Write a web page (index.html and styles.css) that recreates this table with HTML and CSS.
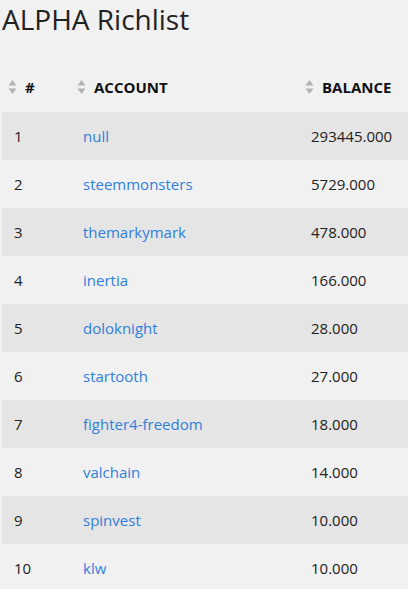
FILE: index.html
```html
<!DOCTYPE html>
<html>
<head>
<meta charset="utf-8">
<link rel="stylesheet" href="styles.css">
</head>
<body>
<h1 class="title">ALPHA Richlist</h1>
<table class="rich">
  <colgroup><col class="c-rank"><col class="c-acct"><col class="c-bal"></colgroup>
  <thead>
    <tr>
      <th><span class="sort"><svg width="9" height="16" viewBox="0 0 9 16"><path d="M4.5 1 L8.5 6.5 H0.5 Z M4.5 15 L8.5 9.5 H0.5 Z" fill="#b3b3b3"/></svg>#</span></th>
      <th><span class="sort"><svg width="9" height="16" viewBox="0 0 9 16"><path d="M4.5 1 L8.5 6.5 H0.5 Z M4.5 15 L8.5 9.5 H0.5 Z" fill="#b3b3b3"/></svg>ACCOUNT</span></th>
      <th><span class="sort"><svg width="9" height="16" viewBox="0 0 9 16"><path d="M4.5 1 L8.5 6.5 H0.5 Z M4.5 15 L8.5 9.5 H0.5 Z" fill="#b3b3b3"/></svg>BALANCE</span></th>
    </tr>
  </thead>
  <tbody>
    <tr><td>1</td><td><a href="#">null</a></td><td>293445.000</td></tr>
    <tr><td>2</td><td><a href="#">steemmonsters</a></td><td>5729.000</td></tr>
    <tr><td>3</td><td><a href="#">themarkymark</a></td><td>478.000</td></tr>
    <tr><td>4</td><td><a href="#">inertia</a></td><td>166.000</td></tr>
    <tr><td>5</td><td><a href="#">doloknight</a></td><td>28.000</td></tr>
    <tr><td>6</td><td><a href="#">startooth</a></td><td>27.000</td></tr>
    <tr><td>7</td><td><a href="#">fighter4-freedom</a></td><td>18.000</td></tr>
    <tr><td>8</td><td><a href="#">valchain</a></td><td>14.000</td></tr>
    <tr><td>9</td><td><a href="#">spinvest</a></td><td>10.000</td></tr>
    <tr><td>10</td><td><a href="#">klw</a></td><td>10.000</td></tr>
  </tbody>
</table>
</body>
</html>
```
FILE: styles.css
```css
html, body {
  margin: 0;
  background: #f1f1f1;
}
body {
  padding: 0 0 0 2px;
  font-family: "Open Sans", "Noto Sans", sans-serif;
  color: #222;
  overflow: hidden;
}
.title {
  margin: 0;
  height: 64px;
  font-size: 28px;
  font-weight: 400;
  line-height: 38px;
  color: #222;
}
.rich {
  border-collapse: collapse;
  table-layout: fixed;
  width: 420px;
  font-size: 15px;
}
.c-rank { width: 69px; }
.c-acct { width: 228px; }
.c-bal { width: 123px; }
.rich th {
  height: 48px;
  padding: 0 0 0 6px;
  text-align: left;
  font-weight: 700;
  font-size: 15px;
  color: #111;
}
.sort {
  display: inline-flex;
  align-items: center;
  gap: 8px;
}
.sort svg { display: block; }
.rich td {
  height: 48px;
  padding: 0 0 0 12px;
  color: #222;
}
.rich tbody tr:nth-child(odd) { background: #e5e5e5; }
.rich a {
  color: #2f7fdc;
  text-decoration: none;
}
```
